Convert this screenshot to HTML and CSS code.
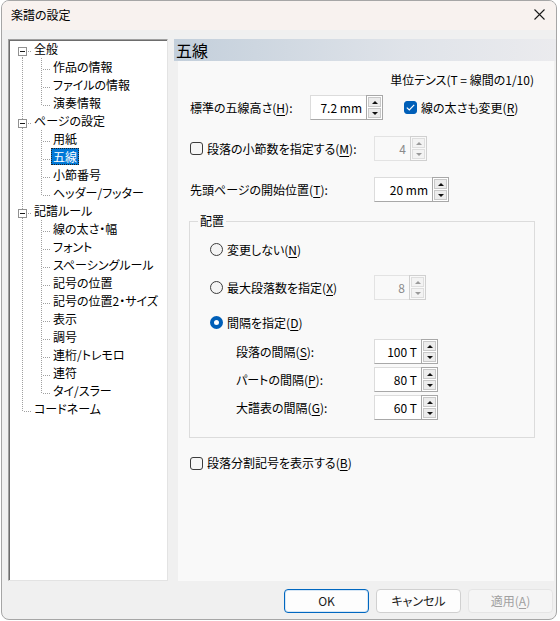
FILE: index.html
```html
<!DOCTYPE html>
<html lang="ja">
<head>
    <meta charset="UTF-8">
    <meta name="viewport" content="width=device-width, initial-scale=1.0">
    <title>楽譜の設定</title>
    <link rel="stylesheet" href="styles.css">
</head>
<body>
    <div class="window">
        <div class="titlebar">
            <span class="title">楽譜の設定</span>
            <svg class="close" width="11" height="11" viewBox="0 0 11 11"><path d="M0.5 0.5L10.5 10.5M10.5 0.5L0.5 10.5" stroke="#1a1a1a" stroke-width="1.1" fill="none"/></svg>
        </div>

        <div class="main">
            <div class="tree">
                <div class="node"><span class="g b h"><i class="pm"></i></span><span class="lbl">全般</span></div>
                <div class="node"><span class="g v"></span><span class="g v h"></span><span class="lbl">作品の情報</span></div>
                <div class="node"><span class="g v"></span><span class="g v h"></span><span class="lbl">ファイルの情報</span></div>
                <div class="node"><span class="g v"></span><span class="g t h"></span><span class="lbl">演奏情報</span></div>
                <div class="node"><span class="g v h"><i class="pm"></i></span><span class="lbl">ページの設定</span></div>
                <div class="node"><span class="g v"></span><span class="g v h"></span><span class="lbl">用紙</span></div>
                <div class="node"><span class="g v"></span><span class="g v h"></span><span class="lbl sel">五線</span></div>
                <div class="node"><span class="g v"></span><span class="g v h"></span><span class="lbl">小節番号</span></div>
                <div class="node"><span class="g v"></span><span class="g t h"></span><span class="lbl">ヘッダー/フッター</span></div>
                <div class="node"><span class="g v h"><i class="pm"></i></span><span class="lbl">記譜ルール</span></div>
                <div class="node"><span class="g v"></span><span class="g v h"></span><span class="lbl">線の太さ・幅</span></div>
                <div class="node"><span class="g v"></span><span class="g v h"></span><span class="lbl">フォント</span></div>
                <div class="node"><span class="g v"></span><span class="g v h"></span><span class="lbl">スペーシングルール</span></div>
                <div class="node"><span class="g v"></span><span class="g v h"></span><span class="lbl">記号の位置</span></div>
                <div class="node"><span class="g v"></span><span class="g v h"></span><span class="lbl">記号の位置2・サイズ</span></div>
                <div class="node"><span class="g v"></span><span class="g v h"></span><span class="lbl">表示</span></div>
                <div class="node"><span class="g v"></span><span class="g v h"></span><span class="lbl">調号</span></div>
                <div class="node"><span class="g v"></span><span class="g v h"></span><span class="lbl">連桁/トレモロ</span></div>
                <div class="node"><span class="g v"></span><span class="g v h"></span><span class="lbl">連符</span></div>
                <div class="node"><span class="g v"></span><span class="g t h"></span><span class="lbl">タイ/スラー</span></div>
                <div class="node"><span class="g t h"></span><span class="lbl">コードネーム</span></div>
            </div>

            <div class="panel">
                <div class="panel-head">五線</div>
                <div class="panel-body">
                    <div class="unit">単位テンス(T = 線間の1/10)</div>

                    <div class="row">
                        <span class="label w120">標準の五線高さ(<u>H</u>):</span>
                        <span class="spin"><span class="val w56">7.2 mm</span><span class="arrows"><span class="up"></span><span class="dn"></span></span></span>
                        <span class="check on gap21"><i class="box"><svg width="9" height="7" viewBox="0 0 9 7"><path d="M0.8 3.6L3.3 6L8.2 0.9" stroke="#fff" stroke-width="1.2" fill="none"/></svg></i>線の太さも変更(<u>R</u>)</span>
                    </div>

                    <div class="row r2">
                        <span class="check w184"><i class="box"></i>段落の小節数を指定する(<u>M</u>):</span>
                        <span class="spin off"><span class="val w36">4</span><span class="arrows"><span class="up"></span><span class="dn"></span></span></span>
                    </div>

                    <div class="row r2">
                        <span class="label w184">先頭ページの開始位置(<u>T</u>):</span>
                        <span class="spin"><span class="val w58">20 mm</span><span class="arrows"><span class="up"></span><span class="dn"></span></span></span>
                    </div>

                    <fieldset class="group">
                        <legend>配置</legend>
                        <div class="opt o1"><i class="radio"></i>変更しない(<u>N</u>)</div>
                        <div class="opt o2">
                            <span class="w164"><i class="radio"></i>最大段落数を指定(<u>X</u>)</span>
                            <span class="spin off"><span class="val w35">8</span><span class="arrows"><span class="up"></span><span class="dn"></span></span></span>
                        </div>
                        <div class="opt o3"><i class="radio on"></i>間隔を指定(<u>D</u>)</div>

                        <div class="sub first">
                            <span class="label w138">段落の間隔(<u>S</u>):</span>
                            <span class="spin"><span class="val w47">100 T</span><span class="arrows"><span class="up"></span><span class="dn"></span></span></span>
                        </div>
                        <div class="sub">
                            <span class="label w138">パートの間隔(<u>P</u>):</span>
                            <span class="spin"><span class="val w47">80 T</span><span class="arrows"><span class="up"></span><span class="dn"></span></span></span>
                        </div>
                        <div class="sub">
                            <span class="label w138">大譜表の間隔(<u>G</u>):</span>
                            <span class="spin"><span class="val w47">60 T</span><span class="arrows"><span class="up"></span><span class="dn"></span></span></span>
                        </div>
                    </fieldset>

                    <div class="row last">
                        <span class="check"><i class="box"></i>段落分割記号を表示する(<u>B</u>)</span>
                    </div>
                </div>
            </div>
        </div>

        <div class="buttons">
            <button class="btn default">OK</button>
            <button class="btn">キャンセル</button>
            <button class="btn" disabled>適用(<u>A</u>)</button>
        </div>
    </div>
</body>
</html>
```

FILE: styles.css
```css
body {
    margin: 0;
    background-color: #ffffff;
    font-family: "Noto Sans CJK JP", "Noto Sans", sans-serif;
    font-size: 12px;
    font-feature-settings: "palt";
    color: #000;
}

.window {
    box-sizing: border-box;
    width: 556px;
    height: 620px;
    margin-left: 1px;
    border: 1px solid #a6a6a6;
    border-radius: 8px;
    background-color: #f0f0f0;
    overflow: hidden;
    display: flex;
    flex-direction: column;
}

.titlebar {
    height: 29px;
    flex: none;
    background-color: #f8f2ef;
    display: flex;
    align-items: center;
    justify-content: space-between;
    padding: 0 9px 0 9px;
}

.title {
    line-height: 16px;
    margin-top: -1px;
}

.close {
    margin-right: 2px;
    margin-top: -2px;
}

.main {
    display: flex;
    gap: 6px;
    padding: 9px 0 0 6px;
    height: 542px;
}

/* tree */
.tree {
    box-sizing: border-box;
    width: 160px;
    height: 542px;
    flex: none;
    background-color: #fff;
    border: 1px solid;
    border-color: #a0a0a0 #e3e3e3 #e3e3e3 #a0a0a0;
    box-shadow: inset 1px 1px 0 #6d6d6d;
}

.node {
    display: flex;
    height: 18px;
}

.g {
    position: relative;
    width: 19px;
    height: 18px;
    flex: none;
}

.g::before,
.g::after {
    content: "";
    position: absolute;
    display: none;
}

.g.v::before,
.g.t::before,
.g.b::before {
    display: block;
    left: 13px;
    width: 1px;
    background: repeating-linear-gradient(to bottom, #a0a0a0 0 1px, transparent 1px 2px);
}

.g.v::before { top: 0; bottom: 0; }
.g.t::before { top: 0; height: 11px; }
.g.b::before { top: 11px; bottom: 0; }

.g.h::after {
    display: block;
    left: 14px;
    top: 11px;
    width: 9px;
    height: 1px;
    background: repeating-linear-gradient(to right, transparent 0 1px, #a0a0a0 1px 2px);
}

.pm {
    position: absolute;
    left: 9px;
    top: 7px;
    box-sizing: border-box;
    width: 9px;
    height: 9px;
    border: 1px solid #919191;
    background-color: #fff;
    z-index: 1;
}

.pm::after {
    content: "";
    position: absolute;
    left: 1px;
    top: 3px;
    width: 5px;
    height: 1px;
    background-color: #1a1a1a;
}

.lbl {
    margin-left: 4px;
    padding: 0 2px;
    height: 17px;
    line-height: 17px;
    white-space: nowrap;
}

.lbl.sel {
    background-color: #0078d7;
    color: #fff;
    outline: 1px dotted #222;
    outline-offset: -1px;
}

/* right panel */
.panel {
    width: 382px;
    display: flex;
    flex-direction: column;
}

.panel-head {
    height: 22px;
    flex: none;
    font-size: 16px;
    line-height: 22px;
    padding-left: 2px;
    background: linear-gradient(to right, #c3cfdb, #dfe3e9 60%, #ebebee);
}

.panel-body {
    flex: 1;
    margin: 0 2px 0 4px;
    background-color: #f9f9f9;
}

.unit {
    margin-top: 9px;
    height: 20px;
    line-height: 20px;
    text-align: right;
    padding-right: 20px;
}

.row {
    display: flex;
    align-items: center;
    height: 25px;
    margin-top: 5px;
    padding-left: 12px;
}

.row.r2 {
    margin-top: 16px;
}

.row.last {
    height: 18px;
    margin-top: 16px;
}

.label,
.check,
.w164 {
    display: flex;
    align-items: center;
    flex: none;
    white-space: nowrap;
    line-height: 18px;
}

.w120 { width: 120px; }
.w138 { width: 138px; }
.w164 { width: 164px; }
.w184 { width: 184px; }
.gap21 { margin-left: 21px; }

u {
    text-decoration-thickness: 1px;
    text-underline-offset: 2px;
}

.check .box {
    box-sizing: border-box;
    width: 13px;
    height: 13px;
    margin-right: 4px;
    border: 1px solid #3c3c3c;
    border-radius: 3px;
    background-color: #f6f6f6;
    display: flex;
    align-items: center;
    justify-content: center;
}

.check.on .box {
    border-color: #005fb8;
    background-color: #005fb8;
}

.radio {
    box-sizing: border-box;
    width: 13px;
    height: 13px;
    margin-right: 4px;
    border: 1px solid #3c3c3c;
    border-radius: 50%;
    background-color: #f4f4f4;
    flex: none;
}

.radio.on {
    border: 4px solid #005fb8;
    background-color: #fff;
}

/* spin box */
.spin {
    display: flex;
    height: 25px;
    flex: none;
}

.spin .val {
    box-sizing: border-box;
    height: 25px;
    line-height: 23px;
    text-align: right;
    padding-right: 4px;
    background-color: #fff;
    border: 1px solid;
    border-color: #dcdcdc #dcdcdc #a8a8a8 #dcdcdc;
    border-right: none;
}

.w35 { width: 35px; }
.w36 { width: 36px; }
.w47 { width: 47px; }
.w56 { width: 56px; }
.w58 { width: 58px; }

.arrows {
    box-sizing: border-box;
    width: 17px;
    height: 25px;
    border: 1px solid #a8a8a8;
    display: flex;
    flex-direction: column;
    background-color: #fff;
}

.arrows .up,
.arrows .dn {
    flex: 1;
    margin: 1px;
    background-color: #ececec;
    border: 1px solid #c8c8c8;
    display: flex;
    align-items: center;
    justify-content: center;
}

.arrows .dn {
    margin-top: 0;
}

.arrows .up::after,
.arrows .dn::after {
    content: "";
    border-left: 3px solid transparent;
    border-right: 3px solid transparent;
}

.arrows .up::after { border-bottom: 3px solid #111; }
.arrows .dn::after { border-top: 3px solid #111; }

.spin.off .val {
    background-color: #f9f9f9;
    border-color: #e3e3e3;
    color: #8a8a8a;
}

.spin.off .arrows {
    border-color: #d0d0d0;
    background-color: #f9f9f9;
}

.spin.off .up,
.spin.off .dn {
    background-color: #f3f3f3;
    border-color: #dedede;
}

.spin.off .up::after { border-bottom-color: #9a9a9a; }
.spin.off .dn::after { border-top-color: #9a9a9a; }

/* group box */
.group {
    width: 346px;
    box-sizing: border-box;
    margin: 11px 0 0 11px;
    padding: 0 0 17px 0;
    border: 1px solid #dcdcdc;
    min-inline-size: 0;
}

.group legend {
    margin-left: 8px;
    padding: 0 2px;
    line-height: 16px;
}

.opt {
    display: flex;
    align-items: center;
    padding-left: 20px;
    height: 20px;
    white-space: nowrap;
}

.o1 { margin-top: 10px; }
.o2 { margin-top: 16px; height: 25px; }
.o3 { margin-top: 12px; }

.sub {
    display: flex;
    align-items: center;
    height: 25px;
    margin-top: 3px;
    padding-left: 46px;
}

.sub.first {
    margin-top: 7px;
}

/* buttons */
.buttons {
    display: flex;
    justify-content: flex-end;
    gap: 7px;
    padding: 8px 3px 0 0;
}

.btn {
    width: 85px;
    height: 24px;
    font-family: inherit;
    font-size: 12px;
    font-feature-settings: "palt";
    line-height: 16px;
    color: #1a1a1a;
    background-color: #fdfdfd;
    border: 1px solid #d0d0d0;
    border-radius: 4px;
    padding: 0;
}

.btn.default {
    border-color: #0067c0;
    box-shadow: inset 0 0 0 1px #d6e6f5;
}

.btn:disabled {
    background-color: #f5f5f5;
    border-color: #e5e5e5;
    color: #a0a0a0;
}
```
